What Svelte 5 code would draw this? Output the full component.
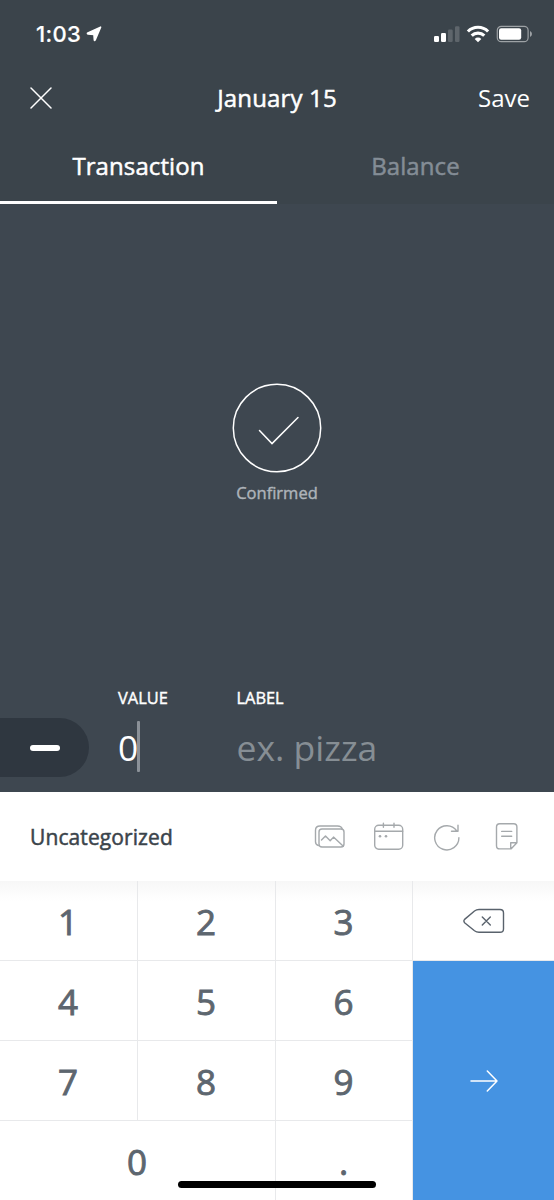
<script lang="ts">
  let activeTab: string = $state('Transaction');
  let value: string = $state('0');

  const tabs = ['Transaction', 'Balance'];
  const keys = ['1', '2', '3', '4', '5', '6', '7', '8', '9', '0', '.'];

  function press(key: string) {
    value = value === '0' && key !== '.' ? key : value + key;
  }

  function erase() {
    value = value.slice(0, -1) || '0';
  }
</script>

<div class="screen">
  <header class="top">
    <div class="status">
      <div class="clock">
        <span class="time">1:03</span>
        <svg width="16" height="16" viewBox="0 0 16 16">
          <path d="M14.6 1.1 9.2 13.9Q8.5 15 8.3 13.8L7.9 8.4 2 7.9Q.8 7.6 1.9 7Z" fill="#fff" stroke="#fff" stroke-width="1.5" stroke-linejoin="round" />
        </svg>
      </div>
      <svg class="indicators" width="102" height="20" viewBox="0 0 102 20">
        <g fill="#fff">
          <rect x="1" y="12" width="5" height="6" rx="1.2" />
          <rect x="8" y="9" width="5" height="9" rx="1.2" />
          <rect x="15" y="5.5" width="4.7" height="12.5" rx="1.2" opacity=".18" />
          <rect x="22" y="2.2" width="4.5" height="15.8" rx="1.2" opacity=".18" />
        </g>
        <g fill="none" stroke="#fff" stroke-width="3.1">
          <path d="M34.9 7.5a14.3 14.3 0 0 1 20.2 0" />
          <path d="M38.7 11.7a8.9 8.9 0 0 1 12.6 0" />
        </g>
        <path d="M41.7 14.9a4.7 4.7 0 0 1 6.6 0L45 18.2Z" fill="#fff" />
        <rect x="64.3" y="2.3" width="30.8" height="15.4" rx="4" fill="none" stroke="#fff" stroke-opacity=".5" stroke-width="1.2" />
        <rect x="66" y="4.3" width="22.2" height="11.4" rx="2.2" fill="#fff" />
        <path d="M97 7q2 1 2 3t-2 3Z" fill="#fff" fill-opacity=".5" />
      </svg>
    </div>

    <div class="titlebar">
      <button class="close" aria-label="Close">
        <svg width="22" height="22" viewBox="0 0 22 22" fill="none" stroke="#fff" stroke-width="1.5" stroke-linecap="round">
          <path d="M1 1 21 21M21 1 1 21" />
        </svg>
      </button>
      <h1>January 15</h1>
      <button class="save">Save</button>
    </div>

    <nav class="tabs">
      {#each tabs as tab}
        <button class="tab" class:active={tab === activeTab} onclick={() => (activeTab = tab)}>{tab}</button>
      {/each}
    </nav>
  </header>

  <main class="confirm">
    <svg width="90" height="90" viewBox="0 0 90 90" fill="none" stroke="#fff" stroke-width="1.5">
      <circle cx="45" cy="45" r="43.7" />
      <path d="M27.5 47.5 40 60.6 66 34.5" stroke-linecap="round" />
    </svg>
    <span>Confirmed</span>
  </main>

  <section class="entry">
    <button class="sign" aria-label="Expense"><span class="minus"></span></button>
    <div class="field amount">
      <span class="caption">VALUE</span>
      <div class="input">{value}<i class="caret"></i></div>
    </div>
    <div class="field">
      <span class="caption">LABEL</span>
      <div class="input placeholder">ex. pizza</div>
    </div>
  </section>

  <section class="toolbar">
    <span class="category">Uncategorized</span>
    <div class="tools">
      <svg width="32" height="30" viewBox="0 0 32 30">
        <rect x="5" y="7" width="25" height="18" rx="3" />
        <path d="M4.3 23.5Q1.5 22.8 1.5 19.8V8.3Q1.5 4 6 4H23.5Q27.5 4 28.2 7M7.5 18.1 11.5 14 16.2 18.8 19.5 15.1 29.3 24.3" />
      </svg>
      <svg width="32" height="30" viewBox="0 0 32 30">
        <rect x="1.7" y="3.2" width="28" height="24" rx="4" />
        <path d="M1.7 9.2H29.7M10.4 1.2V5.2M21 1.2V5.2" />
        <circle class="dot" cx="7" cy="14.3" r="1.3" />
        <circle class="dot" cx="13" cy="14.3" r="1.3" />
      </svg>
      <svg width="32" height="30" viewBox="0 0 32 30">
        <path d="M26.9 15.8A12.1 12.1 0 1 1 24.8 9M26 3.3V9.3H19.5" />
      </svg>
      <svg width="32" height="30" viewBox="0 0 32 30">
        <path d="M8.7 1.7H22.7Q25.9 1.7 25.9 4.9V20.7L20 26.9H8.7Q5.5 26.9 5.5 23.7V4.9Q5.5 1.7 8.7 1.7ZM19.7 26.5V20.8H25.7M10.7 9.4H20.7M10.7 14.2H20.7" />
      </svg>
    </div>
  </section>

  <section class="keypad">
    {#each keys as key}
      <button class="key" class:wide={key === '0'} onclick={() => press(key)}>{key}</button>
    {/each}
    <button class="key erase" aria-label="Delete" onclick={erase}>
      <svg width="42" height="26" viewBox="0 0 42 26" fill="none" stroke="#59626c" stroke-width="1.4" stroke-linecap="round" stroke-linejoin="round">
        <path d="M16 1.5H37Q40.5 1.5 40.5 5V21Q40.5 24.3 37 24.3H16Q13.5 24.3 11.5 22.8L1.6 14.7Q.2 13 1.6 11.4L11.5 3Q13.5 1.5 16 1.5ZM19.3 9 27.3 17M27.3 9 19.3 17" />
      </svg>
    </button>
    <button class="key next" aria-label="Next">
      <svg width="28" height="22" viewBox="0 0 28 22" fill="none" stroke="#fff" stroke-width="1.5" stroke-linecap="round" stroke-linejoin="round">
        <path d="M1 11H27M17.3 1 27 11 17.3 21" />
      </svg>
    </button>
    <div class="home-bar"></div>
  </section>
</div>

<style>
  :global(body) {
    margin: 0;
  }

  .screen {
    display: flex;
    flex-direction: column;
    width: 554px;
    height: 1200px;
    overflow: hidden;
    background: #3e4750;
    color: #fff;
    font-family: 'Open Sans', sans-serif;
  }

  button {
    padding: 0;
    border: 0;
    background: none;
    color: inherit;
    font: inherit;
  }

  svg {
    display: block;
    flex: none;
  }

  /* Open Sans has no medium cut here, thicken the regular one */
  h1,
  .tab,
  .category {
    -webkit-text-stroke: 0.5px currentColor;
  }

  .confirm span,
  .caption {
    -webkit-text-stroke: 0.4px currentColor;
  }

  .top {
    height: 204px;
    background: #3b444b;
  }

  .status {
    display: flex;
    align-items: center;
    justify-content: space-between;
    box-sizing: border-box;
    height: 68px;
    padding: 0 19px 0 36px;
  }

  .clock {
    display: flex;
    align-items: center;
    gap: 5px;
  }

  .time {
    font-family: Inter, sans-serif;
    font-size: 22px;
    font-weight: 500;
    letter-spacing: 0.3px;
    line-height: 30px;
    -webkit-text-stroke: 0.2px currentColor;
  }

  .titlebar {
    display: grid;
    grid-template-columns: 100px 1fr 100px;
    align-items: center;
    height: 60px;
    padding: 0 24px 0 30px;
  }

  .save {
    justify-self: end;
    font-size: 24px;
    line-height: 32px;
  }

  h1 {
    margin: 0;
    padding-right: 6px;
    font-size: 24px;
    font-weight: 400;
    letter-spacing: 0.15px;
    line-height: 32px;
    text-align: center;
  }

  .tabs {
    display: grid;
    grid-template-columns: 1fr 1fr;
    height: 76px;
  }

  .tab {
    padding-top: 2px;
    border-bottom: 3px solid transparent;
    color: #848d96;
    font-size: 24px;
    letter-spacing: 0.1px;
  }

  .tab.active {
    border-color: #fff;
    color: #fff;
  }

  .confirm {
    display: flex;
    flex: 1;
    flex-direction: column;
    align-items: center;
    padding-top: 179px;
    color: #aeb4ba;
    font-size: 16.5px;
    line-height: 22px;
  }

  .confirm span {
    margin-top: 9px;
  }

  .entry {
    display: flex;
    height: 106px;
  }

  .sign {
    display: flex;
    align-items: center;
    justify-content: center;
    width: 89px;
    height: 59px;
    margin: 32px 29px 0 0;
    border-radius: 0 30px 30px 0;
    background: #2f3740;
  }

  .minus {
    width: 30px;
    height: 6px;
    border-radius: 3px;
    background: #fff;
  }

  .field {
    display: flex;
    flex-direction: column;
  }

  .amount {
    width: 118.5px;
  }

  .caption {
    height: 35px;
    font-size: 16.4px;
    line-height: 24px;
  }

  .input {
    display: flex;
    align-items: center;
    height: 52px;
    font-size: 35.5px;
    line-height: 54px;
  }

  .caret {
    width: 3px;
    height: 51px;
    margin: 0 0 2px -1px;
    border-radius: 1px;
    background: #8b9198;
  }

  .placeholder {
    color: #868e94;
  }

  .toolbar {
    display: flex;
    align-items: center;
    justify-content: space-between;
    box-sizing: border-box;
    height: 89px;
    padding: 0 31px 0 30px;
    background: #fff;
    color: #3b444b;
  }

  .category {
    font-size: 21px;
    letter-spacing: 0.1px;
  }

  .tools {
    display: flex;
    gap: 27px;
    fill: none;
    stroke: #a5a9ac;
    stroke-width: 1.4;
    stroke-linecap: round;
    stroke-linejoin: round;
  }

  .dot {
    fill: #a5a9ac;
    stroke: none;
  }

  .keypad {
    position: relative;
    display: grid;
    grid-template-columns: 138px 138px 137px 141px;
    grid-template-rows: repeat(4, 80px);
    height: 319px;
    background: linear-gradient(#f7f7f7, #fff 20px);
    color: #5d666f;
  }

  .key {
    display: flex;
    align-items: center;
    justify-content: center;
    padding: 1px 1px 0 0;
    border-right: 1px solid #e8e9eb;
    border-bottom: 1px solid #e8e9eb;
    font-size: 35px;
    -webkit-text-stroke: 0.9px currentColor;
  }

  .wide {
    grid-column: span 2;
  }

  .erase {
    grid-area: 1 / 4;
    padding: 0;
    border-right: 0;
  }

  .next {
    grid-area: 2 / 4 / span 3;
    padding: 0 0 1px;
    border: 0;
    background: #4593e2;
  }

  .home-bar {
    position: absolute;
    bottom: 12px;
    left: 178px;
    width: 198px;
    height: 7px;
    border-radius: 4px;
    background: #000;
  }
</style>
